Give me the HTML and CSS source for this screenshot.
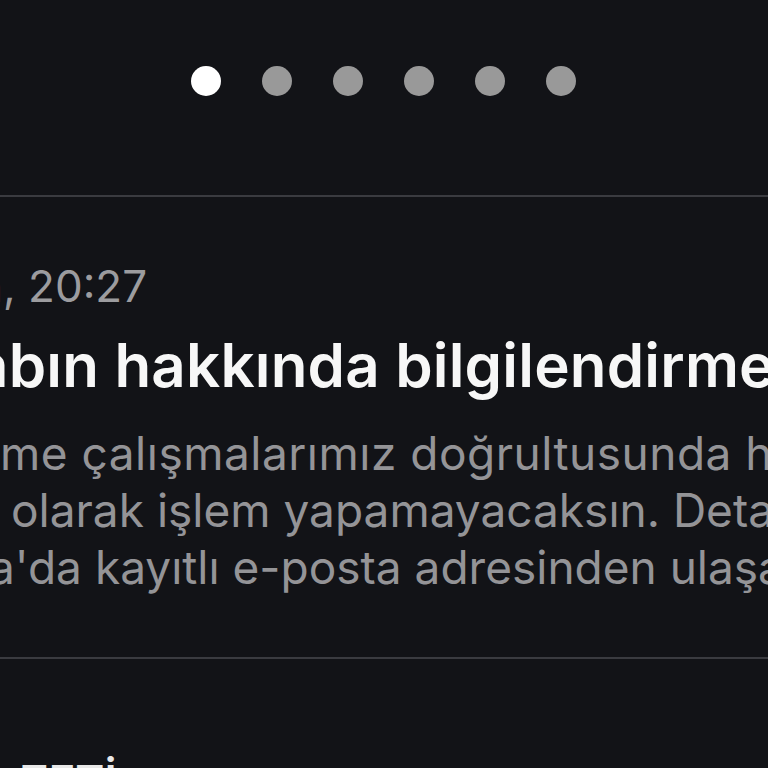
FILE: index.html
```html
<!DOCTYPE html>
<html lang="tr">
<head>
<meta charset="utf-8">
<title>Bildirim</title>
<link rel="stylesheet" href="styles.css">
</head>
<body>
<div class="page">
  <header class="pager">
    <span class="dot dot-active"></span>
    <span class="dot"></span>
    <span class="dot"></span>
    <span class="dot"></span>
    <span class="dot"></span>
    <span class="dot"></span>
  </header>
  <section class="notice">
    <div class="time">n, 20:27</div>
    <div class="title">abın hakkında bilgilendirme</div>
    <div class="body">
      <div class="line line-1">me çalışmalarımız doğrultusunda hesabınla</div>
      <div class="line line-2">olarak işlem yapamayacaksın. Detaylı bilgi</div>
      <div class="line line-3">a'da kayıtlı e-posta adresinden ulaşabilirsin.</div>
    </div>
  </section>
  <section class="next">
    <div class="next-title">ZETİ</div>
  </section>
</div>
</body>
</html>
```

FILE: styles.css
```css
html, body {
  margin: 0;
  padding: 0;
  background: #121317;
  overflow: hidden;
}
body {
  font-family: Inter, "Noto Sans", sans-serif;
  width: 768px;
  height: 768px;
}
.page {
  width: 768px;
  height: 768px;
  overflow: hidden;
}
.pager {
  height: 197px;
  box-sizing: border-box;
  padding-top: 66px;
  padding-left: 191px;
  display: flex;
  justify-content: flex-start;
  align-items: flex-start;
  gap: 41px;
  border-bottom: 2px solid #3a3b40;
}
.dot {
  width: 30px;
  height: 30px;
  border-radius: 50%;
  background: #999999;
  flex: none;
}
.dot-active {
  background: #ffffff;
}
.notice {
  padding-top: 63px;
  padding-bottom: 61px;
  border-bottom: 2px solid #3a3b40;
  white-space: nowrap;
}
.time {
  font-size: 44px;
  line-height: 52px;
  color: #9c9c9f;
  margin-left: -23px;
}
.title {
  margin-top: 17px;
  font-size: 60px;
  line-height: 72px;
  font-weight: 600;
  color: #f7f7f7;
  margin-left: -26px;
  letter-spacing: 0.2px;
}
.body {
  margin-top: 24px;
  font-size: 46px;
  line-height: 57px;
  color: #949497;
}
.line-1 { margin-left: 0; letter-spacing: 0.5px; }
.line-2 { margin-left: 11px; }
.line-3 { margin-left: -11px; }
.next {
  padding-top: 96px;
  white-space: nowrap;
}
.next-title {
  font-size: 44px;
  line-height: 52px;
  font-weight: 600;
  color: #e8e8e8;
  margin-left: 20px;
}
```
